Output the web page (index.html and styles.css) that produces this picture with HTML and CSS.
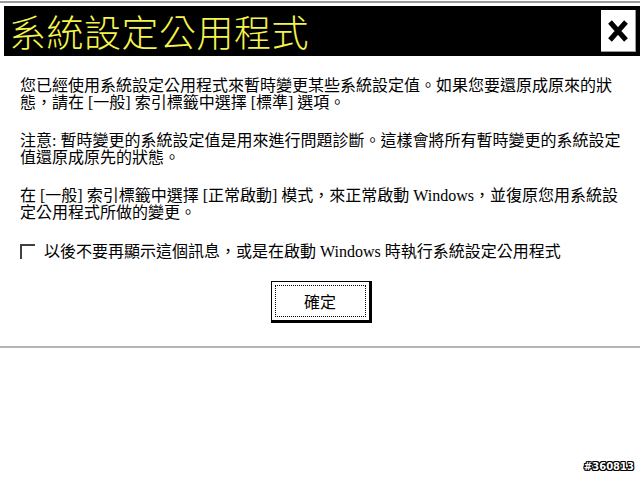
FILE: index.html
```html
<!DOCTYPE html>
<html lang="zh-Hant">
<head>
<meta charset="utf-8">
<link rel="stylesheet" href="styles.css">
</head>
<body>
<div class="topline"></div>
<div class="titlebar">
  <div class="title">系統設定公用程式</div>
  <div class="close"><svg width="22" height="24" viewBox="0 0 22 24"><path d="M3 3 L19 21 M19 3 L3 21" stroke="#000" stroke-width="5" fill="none"/></svg></div>
</div>
<div class="content">
  <p class="para">您已經使用系統設定公用程式來暫時變更某些系統設定值。如果您要還原成原來的狀<br>態，請在 [一般] 索引標籤中選擇 [標準] 選項。</p>
  <p class="para">注意: 暫時變更的系統設定值是用來進行問題診斷。這樣會將所有暫時變更的系統設定<br>值還原成原先的狀態。</p>
  <p class="para">在 [一般] 索引標籤中選擇 [正常啟動] 模式，來正常啟動 Windows，並復原您用系統設<br>定公用程式所做的變更。</p>
  <div class="check-row">
    <span class="checkbox"></span>
    <span class="check-label">以後不要再顯示這個訊息，或是在啟動 Windows 時執行系統設定公用程式</span>
  </div>
  <div class="btn-row">
    <div class="button"><div class="focus">確定</div></div>
  </div>
</div>
<div class="divider"></div>
<div class="footer"><span class="watermark">#360813</span></div>
</body>
</html>
```
FILE: styles.css
```css
html, body {
  margin: 0;
  padding: 0;
  background: #fff;
  width: 640px;
  height: 477px;
  overflow: hidden;
}
body {
  font-family: "Liberation Serif", "Noto Sans CJK TC", serif;
  color: #000;
}
.topline {
  height: 2px;
  margin-top: 1px;
  background: #9a9a9a;
}
.titlebar {
  margin-top: 3px;
  margin-left: 4px;
  height: 50px;
  background: #000;
  display: flex;
  align-items: center;
  justify-content: space-between;
}
.title {
  font-family: "Noto Sans CJK TC", sans-serif;
  font-weight: 300;
  font-size: 37px;
  line-height: 50px;
  letter-spacing: 0.5px;
  color: #f4f44a;
  padding-left: 5px;
  white-space: nowrap;
}
.close {
  width: 34px;
  height: 41px;
  margin-right: 4px;
  background: #fff;
  border-right: 1px solid #9a9a9a;
  border-bottom: 1px solid #9a9a9a;
  display: flex;
  align-items: center;
  justify-content: center;
}
.content {
  padding: 21px 0 0 20px;
  font-size: 16px;
  line-height: 17px;
}
.para {
  margin: 0 0 21px 0;
  white-space: nowrap;
}
.check-row {
  display: flex;
  align-items: center;
  margin-top: 4px;
  height: 18px;
}
.checkbox {
  width: 13px;
  height: 13px;
  border-top: 2px solid #404040;
  border-left: 2px solid #404040;
  margin-right: 9px;
}
.check-label {
  white-space: nowrap;
}
.btn-row {
  display: flex;
  justify-content: center;
  margin-top: 21px;
  padding-right: 20px;
}
.button {
  width: 91px;
  height: 32px;
  border: 1px solid #000;
  border-right: 3px solid #000;
  border-bottom: 3px solid #000;
  background: #fff;
  padding: 3px;
  margin-left: 2px;
}
.focus {
  height: 30px;
  border: 1px dotted #000;
  display: flex;
  align-items: center;
  justify-content: center;
  font-family: "Noto Sans CJK TC", sans-serif;
  font-size: 16px;
}
.divider {
  margin-top: 23px;
  height: 2px;
  background: #b4b4b4;
}
.footer {
  display: flex;
  justify-content: flex-end;
  padding-top: 113px;
  padding-right: 6px;
}
.watermark {
  font-family: "DejaVu Sans", sans-serif;
  font-weight: bold;
  font-size: 10px;
  line-height: 12px;
  color: #fff;
  text-shadow: 1px 0 #000, -1px 0 #000, 0 1px #000, 0 -1px #000, 1px 1px #000, -1px -1px #000, 1px -1px #000, -1px 1px #000;
}
```
